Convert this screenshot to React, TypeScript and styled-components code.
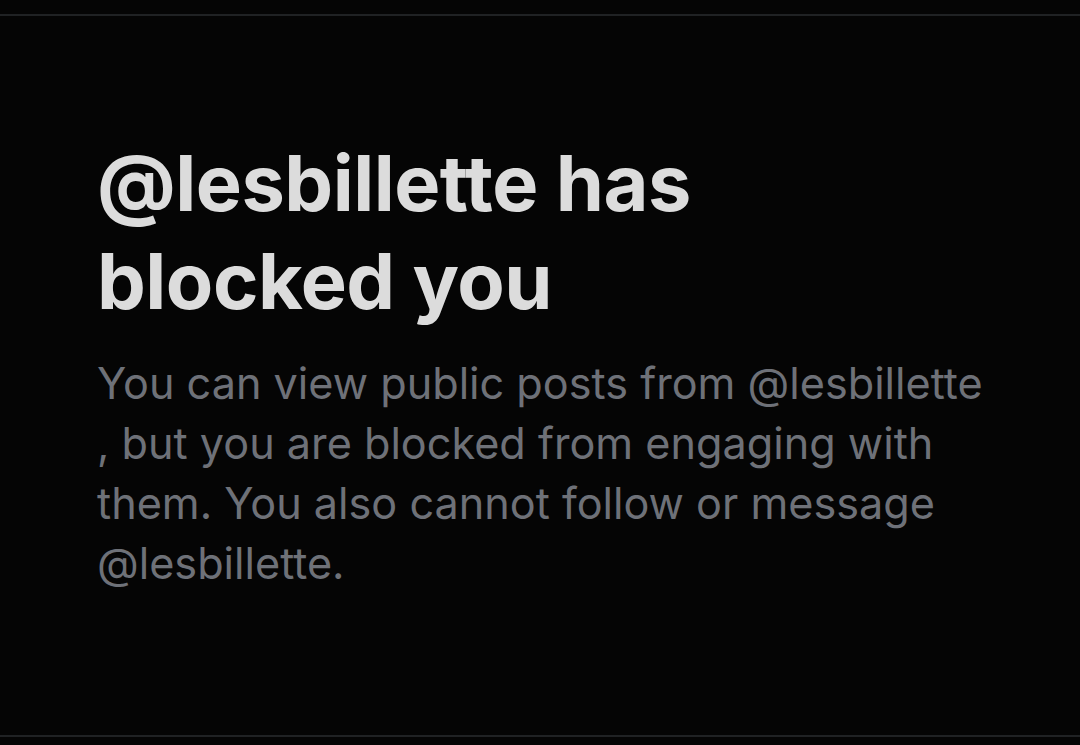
import React from "react";
import styled, { createGlobalStyle } from "styled-components";

const Global = createGlobalStyle`
  html, body { margin: 0; padding: 0; background: #050505; }
  body { font-family: Inter, "Noto Sans", "Liberation Sans", sans-serif; }
`;

const Page = styled.div`
  width: 1080px;
  height: 745px;
  background: #050505;
  display: flex;
  flex-direction: column;
  box-sizing: border-box;
  padding: 14px 0 8px;
`;

const Divider = styled.div`
  height: 2px;
  background: #202224;
  flex: none;
`;

const Content = styled.div`
  flex: 1;
  display: flex;
  flex-direction: column;
  padding: 118px 80px 0 97px;
`;

const Heading = styled.h1`
  margin: 0;
  font-size: 77.5px;
  line-height: 98px;
  font-weight: 700;
  color: #dcdcdc;
  letter-spacing: -0.5px;
  max-width: 620px;
`;

const Body = styled.p`
  margin: 23px 0 0;
  font-size: 43.2px;
  line-height: 60px;
  font-weight: 400;
  color: #6e7178;
  max-width: 900px;
`;

const Handle = styled.span`
  color: inherit;
`;

export default function App() {
  return (
    <Page>
      <Global />
      <Divider />
      <Content>
        <Heading>@lesbillette has blocked you</Heading>
        <Body>
          You can view public posts from <Handle>@lesbillette</Handle>
          <br />, but you are blocked from engaging with them. You also cannot
          follow or message <Handle>@lesbillette</Handle>.
        </Body>
      </Content>
      <Divider />
    </Page>
  );
}
